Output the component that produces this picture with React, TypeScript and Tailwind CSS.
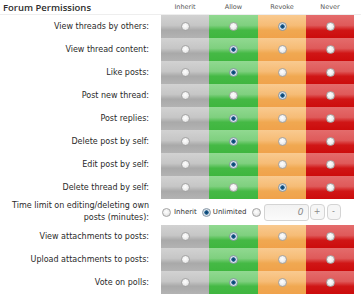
import React from "react";

type Choice = "inherit" | "allow" | "revoke" | "never";

const rows: { label: string; value: Choice }[] = [
  { label: "View threads by others:", value: "revoke" },
  { label: "View thread content:", value: "allow" },
  { label: "Like posts:", value: "allow" },
  { label: "Post new thread:", value: "revoke" },
  { label: "Post replies:", value: "allow" },
  { label: "Delete post by self:", value: "allow" },
  { label: "Edit post by self:", value: "allow" },
  { label: "Delete thread by self:", value: "revoke" },
];

const moreRows: { label: string; value: Choice }[] = [
  { label: "View attachments to posts:", value: "allow" },
  { label: "Upload attachments to posts:", value: "allow" },
  { label: "Vote on polls:", value: "allow" },
];

const cols: { key: Choice; title: string; cls: string }[] = [
  {
    key: "inherit",
    title: "Inherit",
    cls: "w-[48px] bg-[linear-gradient(to_bottom,#d2d2d2_0%,#c6c6c6_45%,#a9a9a9_66%,#b3b3b3_100%)]",
  },
  {
    key: "allow",
    title: "Allow",
    cls: "w-[49px] bg-[linear-gradient(to_bottom,#91d991_0%,#7fd07f_45%,#45b945_66%,#3fb63f_100%)]",
  },
  {
    key: "revoke",
    title: "Revoke",
    cls: "w-[48px] bg-[linear-gradient(to_bottom,#f9ca90_0%,#f6bc76_45%,#f0a851_66%,#f0a24b_100%)]",
  },
  {
    key: "never",
    title: "Never",
    cls: "w-[48px] bg-[linear-gradient(to_bottom,#e46c6c_0%,#df5a5a_45%,#d01616_66%,#cc0c0c_100%)]",
  },
];

function Radio({ checked }: { checked?: boolean }) {
  return checked ? (
    <span className="block size-[9px] rounded-full border border-[#8a9aa8] bg-[radial-gradient(circle,#0b3f6a_0%,#1d5f90_38%,#dfe7ee_50%,#c4ccd4_100%)]" />
  ) : (
    <span className="block size-[9px] rounded-full border border-[#a4a4a4] bg-[radial-gradient(circle_at_45%_40%,#ffffff_0%,#f0f0f0_45%,#d0d0d0_100%)]" />
  );
}

function PermRow({ label, value }: { label: string; value: Choice }) {
  return (
    <div className="flex h-[23px]">
      <div className="flex w-[161px] items-center justify-end pr-[12px] text-[#2a2a2a]">{label}</div>
      {cols.map((c) => (
        <div key={c.key} className={`flex items-center justify-center ${c.cls}`}>
          <Radio checked={value === c.key} />
        </div>
      ))}
    </div>
  );
}

export default function App() {
  return (
    <div className="h-[300px] w-[361px] bg-white text-[8px] leading-none font-['DejaVu_Sans',sans-serif]">
      {/* Header */}
      <div className="flex h-[15px] items-center border-b border-[#eeeeee]">
        <div className="w-[161px] pl-[3px] pt-[2px] font-['Open_Sans',sans-serif] text-[9.5px] font-semibold text-[#2e2e2e]">
          Forum Permissions
        </div>
        {cols.map((c) => (
          <div
            key={c.key}
            className={`text-center text-[6.5px] text-[#555] ${c.key === "allow" ? "w-[49px]" : "w-[48px]"}`}
          >
            {c.title}
          </div>
        ))}
      </div>

      {rows.map((r) => (
        <PermRow key={r.label} {...r} />
      ))}

      {/* Time limit */}
      <div className="flex h-[26px] items-center">
        <div className="w-[161px] pr-[12px] text-right leading-[12px] text-[#2a2a2a]">
          Time limit on editing/deleting own
          <br />
          posts (minutes):
        </div>
        <div className="flex items-center pl-[1px] text-[7px] text-[#333]">
          <Radio />
          <span className="ml-[3px]">Inherit</span>
          <span className="ml-[5px]">
            <Radio checked />
          </span>
          <span className="ml-[2px]">Unlimited</span>
          <span className="ml-[5px]">
            <Radio />
          </span>
          <div className="ml-[3px] flex h-[17px] w-[45px] items-center justify-end rounded-[3px] border border-[#d4d4d4] bg-[linear-gradient(to_bottom,#f2f2f2,#fbfbfb)] pr-[4px] text-[9px] italic text-[#888]">
            0
          </div>
          <div className="ml-[1px] flex h-[16px] w-[15px] items-center justify-center rounded-[4px] border border-[#d4d4d4] bg-[#f6f6f6] text-[8px] text-[#888]">
            +
          </div>
          <div className="ml-[2px] flex h-[16px] w-[14px] items-center justify-center rounded-[4px] border border-[#d4d4d4] bg-[#f6f6f6] text-[8px] text-[#888]">
            -
          </div>
        </div>
      </div>

      {moreRows.map((r) => (
        <PermRow key={r.label} {...r} />
      ))}
    </div>
  );
}
